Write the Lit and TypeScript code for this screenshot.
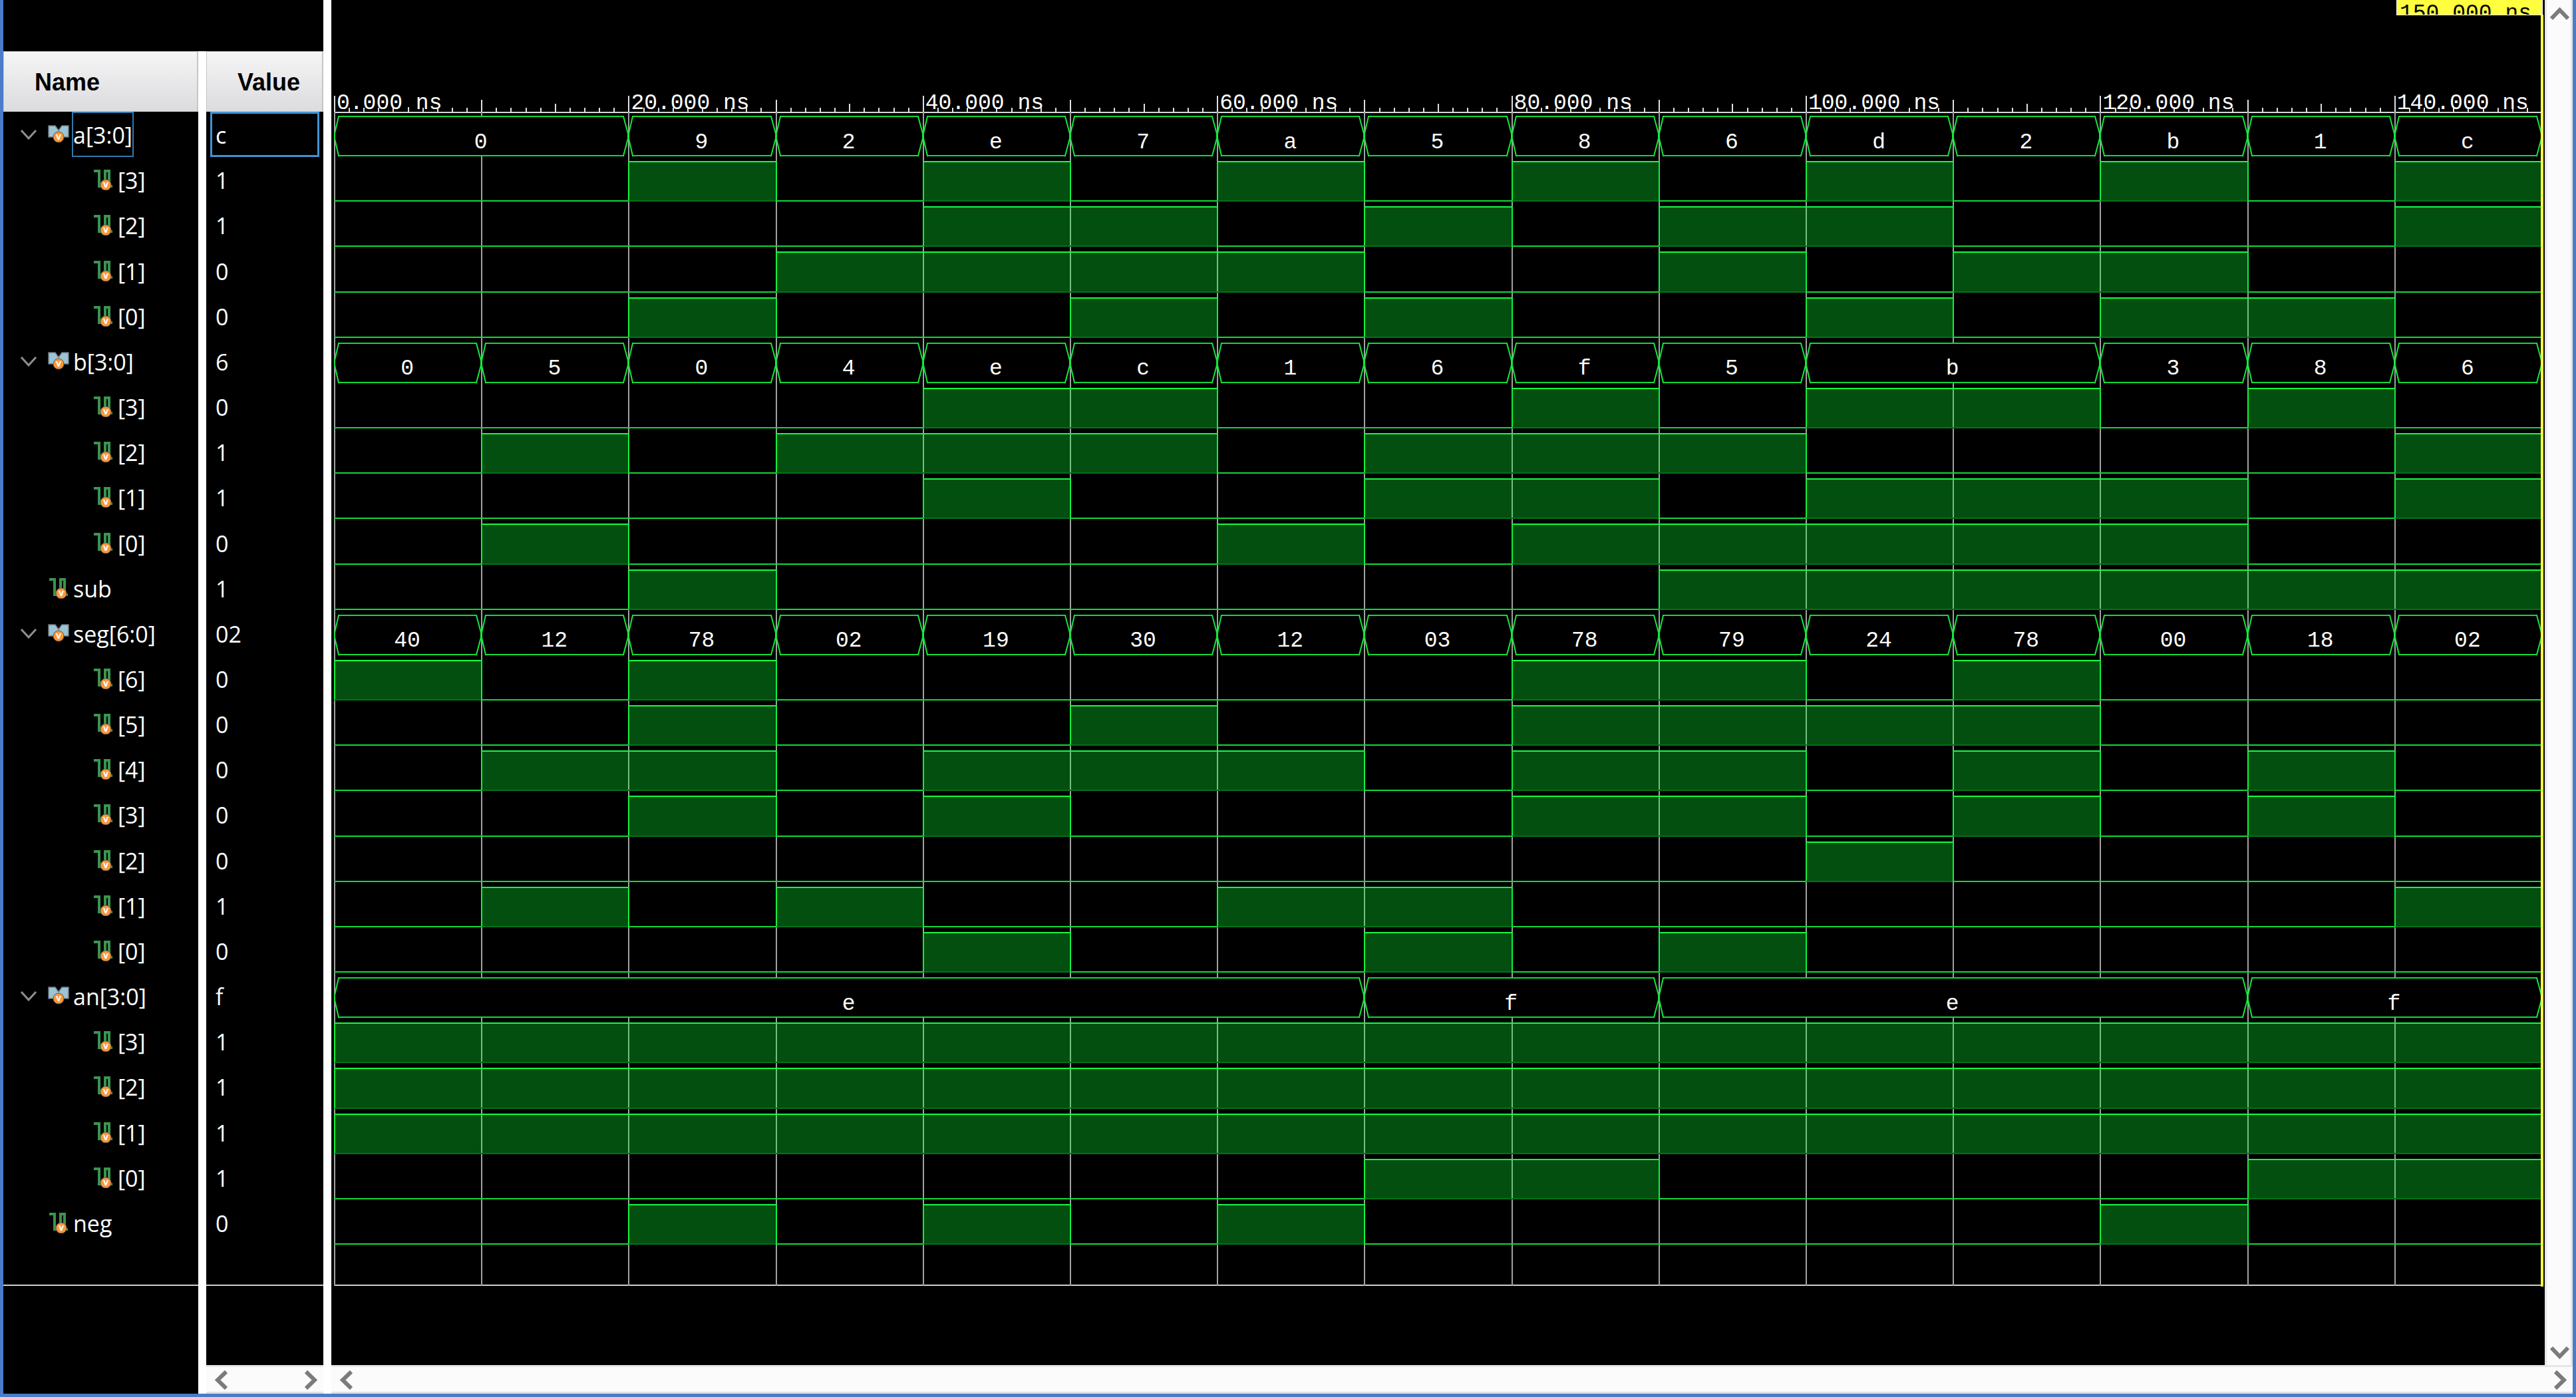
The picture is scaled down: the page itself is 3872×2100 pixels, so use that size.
import { LitElement, html, svg, css } from "lit";
import { customElement, property } from "lit/decorators.js";
import { classMap } from "lit/directives/class-map.js";
import { styleMap } from "lit/directives/style-map.js";

interface Signal {
  name: string;
  samples: number[];
  bits: number;
}

interface Row {
  label: string;
  kind: "bus" | "bit";
  child: boolean;
  samples: string[];
}

interface Segment {
  value: string;
  span: number;
}

const STEPS = 15;
const NS_PER_STEP = 10;

const SIGNALS: Signal[] = [
  { name: "a", bits: 4, samples: [0, 0, 9, 2, 14, 7, 10, 5, 8, 6, 13, 2, 11, 1, 12] },
  { name: "b", bits: 4, samples: [0, 5, 0, 4, 14, 12, 1, 6, 15, 5, 11, 11, 3, 8, 6] },
  { name: "sub", bits: 1, samples: [0, 0, 1, 0, 0, 0, 0, 0, 0, 1, 1, 1, 1, 1, 1] },
  {
    name: "seg",
    bits: 7,
    samples: [0x40, 0x12, 0x78, 0x02, 0x19, 0x30, 0x12, 0x03, 0x78, 0x79, 0x24, 0x78, 0x00, 0x18, 0x02],
  },
  { name: "an", bits: 4, samples: [14, 14, 14, 14, 14, 14, 14, 15, 15, 14, 14, 14, 14, 15, 15] },
  { name: "neg", bits: 1, samples: [0, 0, 1, 0, 1, 0, 1, 0, 0, 0, 0, 0, 1, 0, 0] },
];

/* A bus gives one hex row followed by one row per bit, high bit first. */
function toRows(signal: Signal): Row[] {
  if (signal.bits === 1) {
    return [{ label: signal.name, kind: "bit", child: false, samples: signal.samples.map(String) }];
  }
  const digits = Math.ceil(signal.bits / 4);
  const rows: Row[] = [
    {
      label: `${signal.name}[${signal.bits - 1}:0]`,
      kind: "bus",
      child: false,
      samples: signal.samples.map((v) => v.toString(16).padStart(digits, "0")),
    },
  ];
  for (let bit = signal.bits - 1; bit >= 0; bit--) {
    rows.push({
      label: `[${bit}]`,
      kind: "bit",
      child: true,
      samples: signal.samples.map((v) => String((v >> bit) & 1)),
    });
  }
  return rows;
}

/* Joins equal neighbouring samples into one segment. */
function toSegments(samples: string[]): Segment[] {
  const out: Segment[] = [];
  for (const value of samples) {
    const last = out[out.length - 1];
    if (last && last.value === value) last.span++;
    else out.push({ value, span: 1 });
  }
  return out;
}

const ROWS: Row[] = SIGNALS.flatMap(toRows);

const badge = (x: number, y: number) => svg`
  <circle cx=${x} cy=${y} r="8" fill="#f9973a" stroke="#6b5a48" stroke-width="1"></circle>
  <text x=${x} y=${y + 4} text-anchor="middle" font-family="Open Sans, sans-serif" font-weight="700" font-size="14" fill="#fff">v</text>`;

const busIcon = html`<svg class="icon" width="32" height="32" viewBox="0 0 32 32" aria-hidden="true">
  <path d="M1 3H11L16 10L21 3H31V20H1Z" fill="#9cc4d6" stroke="#6b7a82" stroke-width="1.5"></path>
  ${badge(16, 20)}
</svg>`;

const bitIcon = html`<svg class="icon" width="32" height="32" viewBox="0 0 32 32" aria-hidden="true">
  <path d="M2 3H10V26H19V3H25V26H30" fill="none" stroke="#3b9450" stroke-width="4"></path>
  ${badge(20, 24)}
</svg>`;

const CHEVRONS: Record<string, string> = {
  left: "M18 3L5 15.5L18 28",
  right: "M3 3L16 15.5L3 28",
  up: "M3 18L15.5 5L28 18",
  down: "M3 3L15.5 16L28 3",
};

@customElement("scroll-strip")
export class ScrollStrip extends LitElement {
  @property({ type: Boolean, reflect: true }) vertical = false;

  static styles = css`
    :host {
      display: flex;
      justify-content: space-between;
      align-items: center;
      box-sizing: border-box;
      height: 43px;
      padding: 2px 9px 0 12px;
      background: #fbfbfb;
      border-top: 3px solid #e6e6e6;
      border-bottom: 3px solid #e0e1e3;
    }
    :host([vertical]) {
      flex-direction: column;
      width: 42px;
      height: auto;
      padding: 10px 0 8px 2px;
      border: 0 solid #e6e6e6;
      border-width: 0 3px;
    }
    .arrow {
      display: block;
      padding: 0;
      border: 0;
      background: none;
    }
    .glyph {
      display: block;
      fill: none;
      stroke: #7b7b7b;
      stroke-width: 6;
    }
  `;

  private arrow(dir: string) {
    const w = this.vertical ? 31 : 20;
    const h = this.vertical ? 21 : 31;
    return html`<button class="arrow" aria-label="Scroll ${dir}">
      <svg class="glyph" width=${w} height=${h} viewBox="0 0 ${w} ${h}"><path d=${CHEVRONS[dir]}></path></svg>
    </button>`;
  }

  render() {
    return this.vertical
      ? html`${this.arrow("up")}${this.arrow("down")}`
      : html`${this.arrow("left")}${this.arrow("right")}`;
  }
}

@customElement("wave-row")
export class WaveRow extends LitElement {
  @property({ attribute: false }) row!: Row;

  static styles = css`
    :host {
      display: grid;
      grid-template-columns: repeat(15, minmax(0, 1fr));
      padding: 6px 0 1px;
      min-height: 0;
    }
    .seg {
      box-sizing: border-box;
      min-width: 0;
    }
    .low {
      border-bottom: 2px solid #12d83a;
    }
    .edge {
      border-left: 2px solid #12f040;
    }
    .high {
      background: rgba(8, 255, 52, 0.31);
      border-top: 2px solid #14fa46;
      border-left: 2px solid #12f040;
      border-bottom: 2px solid #05701c;
      background-clip: padding-box;
    }
    .bus {
      display: flex;
      min-height: 0;
    }
    .cap {
      flex: none;
      width: 8px;
      height: 100%;
      overflow: visible;
      fill: #000;
      stroke: #12e83c;
      stroke-width: 2;
    }
    .body {
      flex: 1;
      box-sizing: border-box;
      display: flex;
      align-items: center;
      justify-content: center;
      min-width: 0;
      padding: 20px 1px 0 0;
      background: #000;
      border: 0 solid #12d83a;
      border-width: 2px 0;
      color: #fff;
      font: 33px/36px "Liberation Mono", monospace;
    }
  `;

  private cap(d: string) {
    return html`<svg class="cap" viewBox="0 0 8 61" preserveAspectRatio="none" aria-hidden="true">
      <path d=${d} vector-effect="non-scaling-stroke"></path>
    </svg>`;
  }

  render() {
    return toSegments(this.row.samples).map((s, i) => {
      const place = styleMap({ gridColumn: `span ${s.span}` });
      if (this.row.kind === "bus") {
        return html`<div class="seg bus" style=${place}>
          ${this.cap("M8 1H7L1 27V34L7 60H8")}
          <div class="body">${s.value}</div>
          ${this.cap("M0 1H1L8 27V34L1 60H0")}
        </div>`;
      }
      const high = s.value === "1";
      return html`<div class=${classMap({ seg: true, high, low: !high, edge: !high && i > 0 })} style=${place}></div>`;
    });
  }
}

@customElement("time-ruler")
export class TimeRuler extends LitElement {
  static styles = css`
    :host {
      display: grid;
      grid-template-columns: repeat(15, minmax(0, 1fr));
      align-items: end;
      height: 168px;
      color: #fff;
      font: 33px/36px "Liberation Mono", monospace;
    }
    .step {
      position: relative;
      display: grid;
      grid-template-columns: repeat(10, minmax(0, 1fr));
      align-items: end;
      height: 24px;
    }
    .tick {
      height: 6px;
      border-left: 2px solid #e0e0e0;
    }
    .half {
      height: 12px;
    }
    .minor {
      height: 18px;
    }
    .major {
      height: 24px;
    }
    .labelled .half {
      height: 7px;
    }
    .label {
      position: absolute;
      left: 4px;
      bottom: -6px;
      white-space: nowrap;
    }
  `;

  render() {
    return Array.from({ length: STEPS }, (_, step) => {
      const labelled = step % 2 === 0;
      return html`<div class=${classMap({ step: true, labelled })}>
        ${Array.from(
          { length: 10 },
          (_, t) =>
            html`<i
              class=${classMap({ tick: true, half: t === 5, major: t === 0 && labelled, minor: t === 0 && !labelled })}
            ></i>`,
        )}
        ${labelled ? html`<span class="label">${step * NS_PER_STEP}.000 ns</span>` : null}
      </div>`;
    });
  }
}

@customElement("app-root")
export class AppRoot extends LitElement {
  static styles = css`
    :host {
      display: block;
      background: #000;
      color: #fff;
      font: 34px/46px "Open Sans", "Noto Sans", sans-serif;
    }
    .frame {
      box-sizing: border-box;
      display: flex;
      height: 100vh;
      min-height: 1400px;
      border: 5px solid #4a7cc9;
      border-top: 0;
    }
    .side {
      flex: none;
      display: flex;
      flex-direction: column;
      border-right: 12px solid #fff;
    }
    .side-top {
      height: 77px;
    }
    .columns {
      flex: 1;
      display: flex;
      gap: 12px;
      background: #fff;
      min-height: 0;
    }
    .column {
      display: flex;
      flex-direction: column;
      background: #000;
    }
    .names {
      width: 293px;
    }
    .values {
      width: 176px;
    }
    .head {
      flex: none;
      box-sizing: border-box;
      height: 91px;
      margin: 0;
      padding: 3px 0 0 46px;
      border: 2px solid #c6c6c6;
      border-width: 1px 2px 1px 1px;
      background: linear-gradient(#f5f5f5, #dcdcdf);
      color: #000;
      font: 700 36px/86px "Liberation Sans", Arial, sans-serif;
    }
    .list {
      flex: 1;
      display: grid;
      grid-template-rows: repeat(25, minmax(0, 1fr));
      margin: 0;
      padding: 0;
      list-style: none;
      min-height: 0;
    }
    .name {
      display: flex;
      align-items: center;
      padding-left: 25px;
    }
    .child {
      padding-left: 92px;
    }
    .toggle {
      flex: none;
      width: 26px;
      height: 26px;
      margin-right: 16px;
      padding: 0;
      border: 0;
      background: none;
    }
    .fold {
      display: block;
      fill: none;
      stroke: #8f8f8f;
      stroke-width: 3;
    }
    .space {
      flex: none;
      width: 42px;
    }
    .icon {
      flex: none;
      display: block;
      margin-right: 4px;
    }
    .text {
      box-sizing: border-box;
      display: flex;
      align-items: center;
      height: 100%;
      padding-top: 2px;
      border: 2px solid transparent;
      white-space: nowrap;
    }
    .value {
      box-sizing: border-box;
      display: flex;
      align-items: center;
      margin: 0 6px;
      padding: 2px 0 0 5px;
      border: 3px solid transparent;
    }
    .text.chosen {
      border-color: #3079ad;
    }
    .value.chosen {
      border-color: #4193d3;
    }
    .tail {
      flex: none;
      box-sizing: border-box;
      height: 61px;
      border-bottom: 2px solid #cfcfcf;
    }
    .blank {
      flex: none;
      height: 119px;
    }
    .under {
      flex: none;
      height: 43px;
    }
    .viewer {
      flex: 1;
      display: flex;
      flex-direction: column;
      min-width: 0;
    }
    .stage {
      flex: 1;
      display: flex;
      min-height: 0;
    }
    .wave {
      position: relative;
      flex: 1;
      display: flex;
      flex-direction: column;
      padding: 0 5px 0 4px;
      min-width: 0;
    }
    .plot {
      position: relative;
      flex: 1;
      display: flex;
      flex-direction: column;
      min-height: 0;
      box-shadow: inset 0 2px #d8d8d8;
    }
    .grid {
      position: absolute;
      inset: 0;
      display: grid;
      grid-template-columns: repeat(15, minmax(0, 1fr));
    }
    .line {
      border-left: 2px solid #a2a2a2;
    }
    .rows {
      position: relative;
    }
    .cursor {
      position: absolute;
      top: 22px;
      right: 2px;
      bottom: 118px;
      width: 4px;
      background: #ffff40;
    }
    .flag {
      position: absolute;
      top: 0;
      right: 3px;
      box-sizing: border-box;
      width: 220px;
      height: 23px;
      padding-left: 4px;
      overflow: hidden;
      border: 1px solid #fff;
      border-top: 0;
      background: #ffff40;
      color: #000;
      font: 33px/42px "Liberation Mono", monospace;
      white-space: nowrap;
    }
  `;

  private name(row: Row, index: number) {
    return html`<li class=${classMap({ name: true, child: row.child })}>
      ${row.kind === "bus"
        ? html`<button class="toggle" aria-label="Collapse ${row.label}" aria-expanded="true">
            <svg class="fold" width="26" height="26" viewBox="0 0 26 26"><path d="M2 7L13 19L24 7"></path></svg>
          </button>`
        : html`<span class="space"></span>`}
      ${row.kind === "bus" ? busIcon : bitIcon}
      <span class=${classMap({ text: true, chosen: index === 0 })}>${row.label}</span>
    </li>`;
  }

  render() {
    return html`<main class="frame">
      <section class="side" aria-label="Signals">
        <div class="side-top"></div>
        <div class="columns">
          <div class="column names">
            <h2 class="head">Name</h2>
            <ul class="list">
              ${ROWS.map((row, i) => this.name(row, i))}
            </ul>
            <div class="tail"></div>
            <div class="blank"></div>
            <div class="under"></div>
          </div>
          <div class="column values">
            <h2 class="head">Value</h2>
            <ul class="list">
              ${ROWS.map(
                (row, i) => html`<li class=${classMap({ value: true, chosen: i === 0 })}>${row.samples[STEPS - 1]}</li>`,
              )}
            </ul>
            <div class="tail"></div>
            <div class="blank"></div>
            <scroll-strip></scroll-strip>
          </div>
        </div>
      </section>
      <section class="viewer" aria-label="Waveforms">
        <div class="stage">
          <div class="wave">
            <time-ruler></time-ruler>
            <div class="plot">
              <div class="grid">${Array.from({ length: STEPS }, () => html`<i class="line"></i>`)}</div>
              <div class="list rows">${ROWS.map((row) => html`<wave-row .row=${row}></wave-row>`)}</div>
              <div class="tail"></div>
            </div>
            <div class="blank"></div>
            <div class="cursor"></div>
            <div class="flag">150.000 ns</div>
          </div>
          <scroll-strip vertical></scroll-strip>
        </div>
        <scroll-strip></scroll-strip>
      </section>
    </main>`;
  }
}
